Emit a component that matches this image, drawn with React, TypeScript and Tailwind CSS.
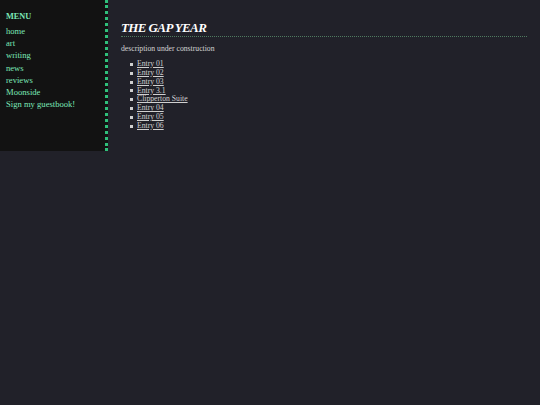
import React from "react";

const menu = ["home", "art", "writing", "news", "reviews", "Moonside", "Sign my guestbook!"];
const entries = ["Entry 01", "Entry 02", "Entry 03", "Entry 3.1", "Clipperton Suite", "Entry 04", "Entry 05", "Entry 06"];

export default function App() {
  return (
    <div className="min-h-[405px] w-[540px] bg-[#212129] flex items-start font-['Liberation_Serif',serif]">
      {/* Sidebar */}
      <div className="w-[108px] h-[151px] shrink-0 bg-[#121212] border-r-[3px] border-dotted border-[#2fbf7a] pl-[6px] pt-[11px]">
        <div className="text-[8.3px] font-bold text-[#7be8b8] leading-[12px] mb-[2px]">MENU</div>
        <ul>
          {menu.map((m) => (
            <li key={m} className="text-[8.6px] leading-[12.2px] text-[#7be8b8]">
              <a href="#">{m}</a>
            </li>
          ))}
        </ul>
      </div>

      {/* Main */}
      <div className="flex-1 pl-[13px] pr-[13px] pt-[20px]">
        <h1 className="text-[13px] italic font-bold tracking-[-0.6px] text-white leading-[15px] pb-[1px] border-b border-dotted border-[#4f7a60]">
          THE GAP YEAR
        </h1>
        <p className="text-[7.7px] leading-[10px] text-[#d4d4d4] mt-[7px]">description under construction</p>
        <ul className="pl-[9px] mt-[6px] text-[7.7px] leading-[8.85px] text-[#d0d0d0]">
          {entries.map((e) => (
            <li key={e} className="flex items-center gap-[4px]">
              <span className="w-[3px] h-[3px] bg-[#d0d0d0] shrink-0" />
              <a href="#" className="underline text-[#d0d0d0]">{e}</a>
            </li>
          ))}
        </ul>
      </div>
    </div>
  );
}
